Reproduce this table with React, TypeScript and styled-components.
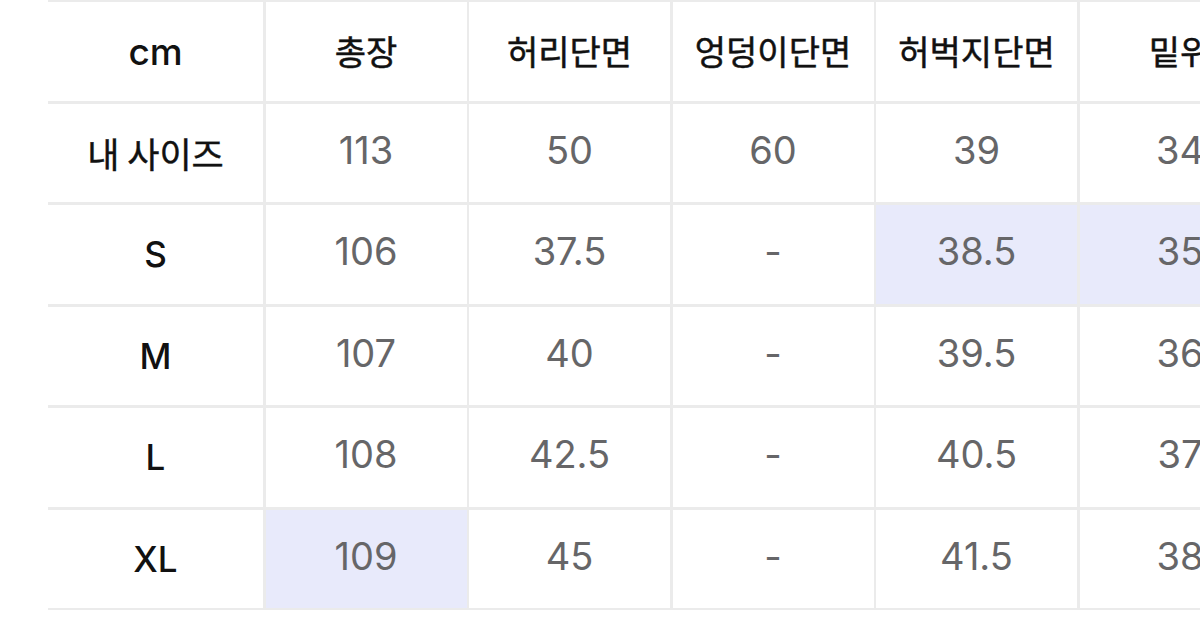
import styled, { createGlobalStyle } from "styled-components";

const GlobalStyle = createGlobalStyle`
  html, body {
    margin: 0;
    padding: 0;
    background: #ffffff;
    overflow: hidden;
  }
  body {
    font-family: Inter, "Noto Sans CJK KR", sans-serif;
  }
`;

const Page = styled.div`
  width: 1200px;
  height: 636px;
  overflow: hidden;
  background: #ffffff;
`;

const Table = styled.div`
  display: grid;
  grid-template-columns: 215px repeat(5, 201px);
  grid-template-rows: repeat(6, 98.5px);
  gap: 3px 2.5px;
  padding: 2px 0;
  margin-left: 48px;
  width: max-content;
  background: #ebebeb;
`;

const Cell = styled.div<{ $hl?: boolean }>`
  display: flex;
  align-items: center;
  justify-content: center;
  background: ${(p) => (p.$hl ? "#e8eafb" : "#ffffff")};
  white-space: nowrap;
`;

// 한글 헤더는 regular + 살짝 stroke로 medium 느낌
const HeadCell = styled(Cell)`
  font-family: "Noto Sans CJK KR", Inter, sans-serif;
  font-size: 34px;
  font-weight: 400;
  color: #111111;
  -webkit-text-stroke: 0.5px #111111;
  padding-bottom: 2px;
`;

const UnitCell = styled(Cell)`
  font-family: Inter, "Noto Sans CJK KR", sans-serif;
  font-size: 37px;
  font-weight: 500;
  color: #111111;
`;

const LabelCell = styled(Cell)`
  font-family: Inter, "Noto Sans CJK KR", sans-serif;
  font-size: 35px;
  font-weight: 500;
  color: #111111;
  & > span.kr {
    font-family: "Noto Sans CJK KR", sans-serif;
    font-size: 35px;
    font-weight: 400;
    -webkit-text-stroke: 0.4px #111111;
  }
`;

const ValueCell = styled(Cell)`
  font-family: Inter, sans-serif;
  font-size: 38px;
  font-weight: 400;
  color: #666668;
  padding-bottom: 6px;
`;

const headers = ["총장", "허리단면", "엉덩이단면", "허벅지단면", "밑위"];

const rows: { label: string; kr?: boolean; values: string[]; hl?: number[] }[] = [
  { label: "내 사이즈", kr: true, values: ["113", "50", "60", "39", "34"] },
  { label: "S", values: ["106", "37.5", "-", "38.5", "35"], hl: [3, 4] },
  { label: "M", values: ["107", "40", "-", "39.5", "36"] },
  { label: "L", values: ["108", "42.5", "-", "40.5", "37"] },
  { label: "XL", values: ["109", "45", "-", "41.5", "38"], hl: [0] },
];

export default function App() {
  return (
    <Page>
      <GlobalStyle />
      <Table>
        <UnitCell>cm</UnitCell>
        {headers.map((h) => (
          <HeadCell key={h}>{h}</HeadCell>
        ))}
        {rows.map((row) => (
          <>
            <LabelCell key={row.label}>
              {row.kr ? <span className="kr">{row.label}</span> : row.label}
            </LabelCell>
            {row.values.map((v, i) => (
              <ValueCell key={row.label + i} $hl={row.hl?.includes(i)}>
                {v}
              </ValueCell>
            ))}
          </>
        ))}
      </Table>
    </Page>
  );
}
